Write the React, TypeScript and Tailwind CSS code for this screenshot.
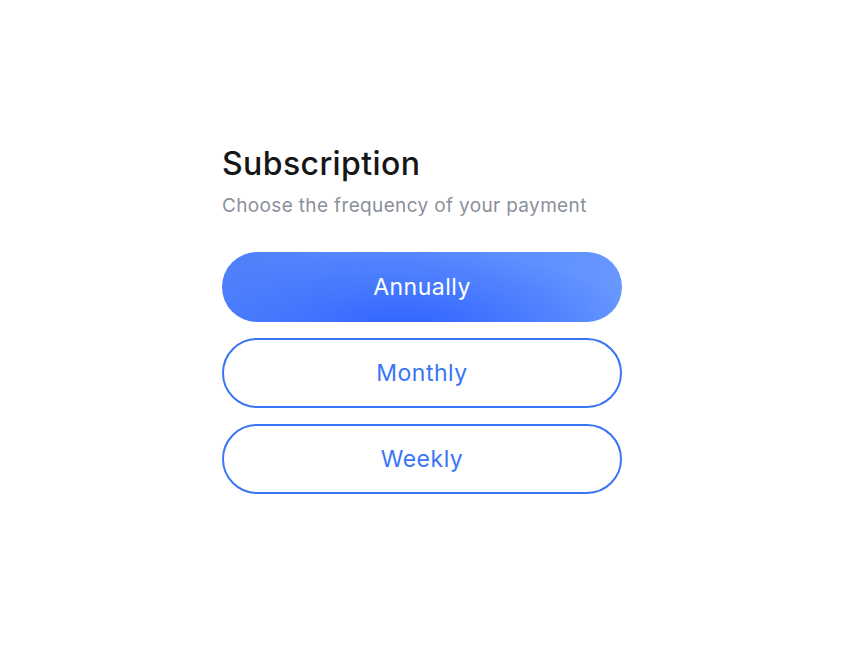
export default function App() {
  const font = { fontFamily: 'Inter, "Noto Sans", sans-serif' };
  return (
    <div className="w-[844px] h-[656px] bg-white flex justify-center pt-[143px]" style={font}>
      <div className="w-[400px] flex flex-col">
        <h1 className="text-[32px] leading-[42px] font-medium text-[#161616] tracking-[0.4px]">Subscription</h1>
        <p className="mt-[8px] text-[19px] leading-[26px] text-[#8b909b] tracking-[0.35px]">Choose the frequency of your payment</p>
        <div className="mt-[33px] flex flex-col gap-[16px]">
          <button className="h-[70px] rounded-full text-white text-[23px] tracking-[0.5px] bg-[radial-gradient(ellipse_at_45%_110%,#2f63ff_0%,rgba(60,110,255,0.6)_40%,rgba(90,140,255,0)_75%),linear-gradient(100deg,#4f80fb_0%,#5a8cff_60%,#6897ff_100%)]">
            Annually
          </button>
          <button className="h-[70px] rounded-full border-2 border-[#3a75f5] text-[#3a75f5] text-[23px] tracking-[0.5px] bg-white">
            Monthly
          </button>
          <button className="h-[70px] rounded-full border-2 border-[#3a75f5] text-[#3a75f5] text-[23px] tracking-[0.5px] bg-white">
            Weekly
          </button>
        </div>
      </div>
    </div>
  );
}
